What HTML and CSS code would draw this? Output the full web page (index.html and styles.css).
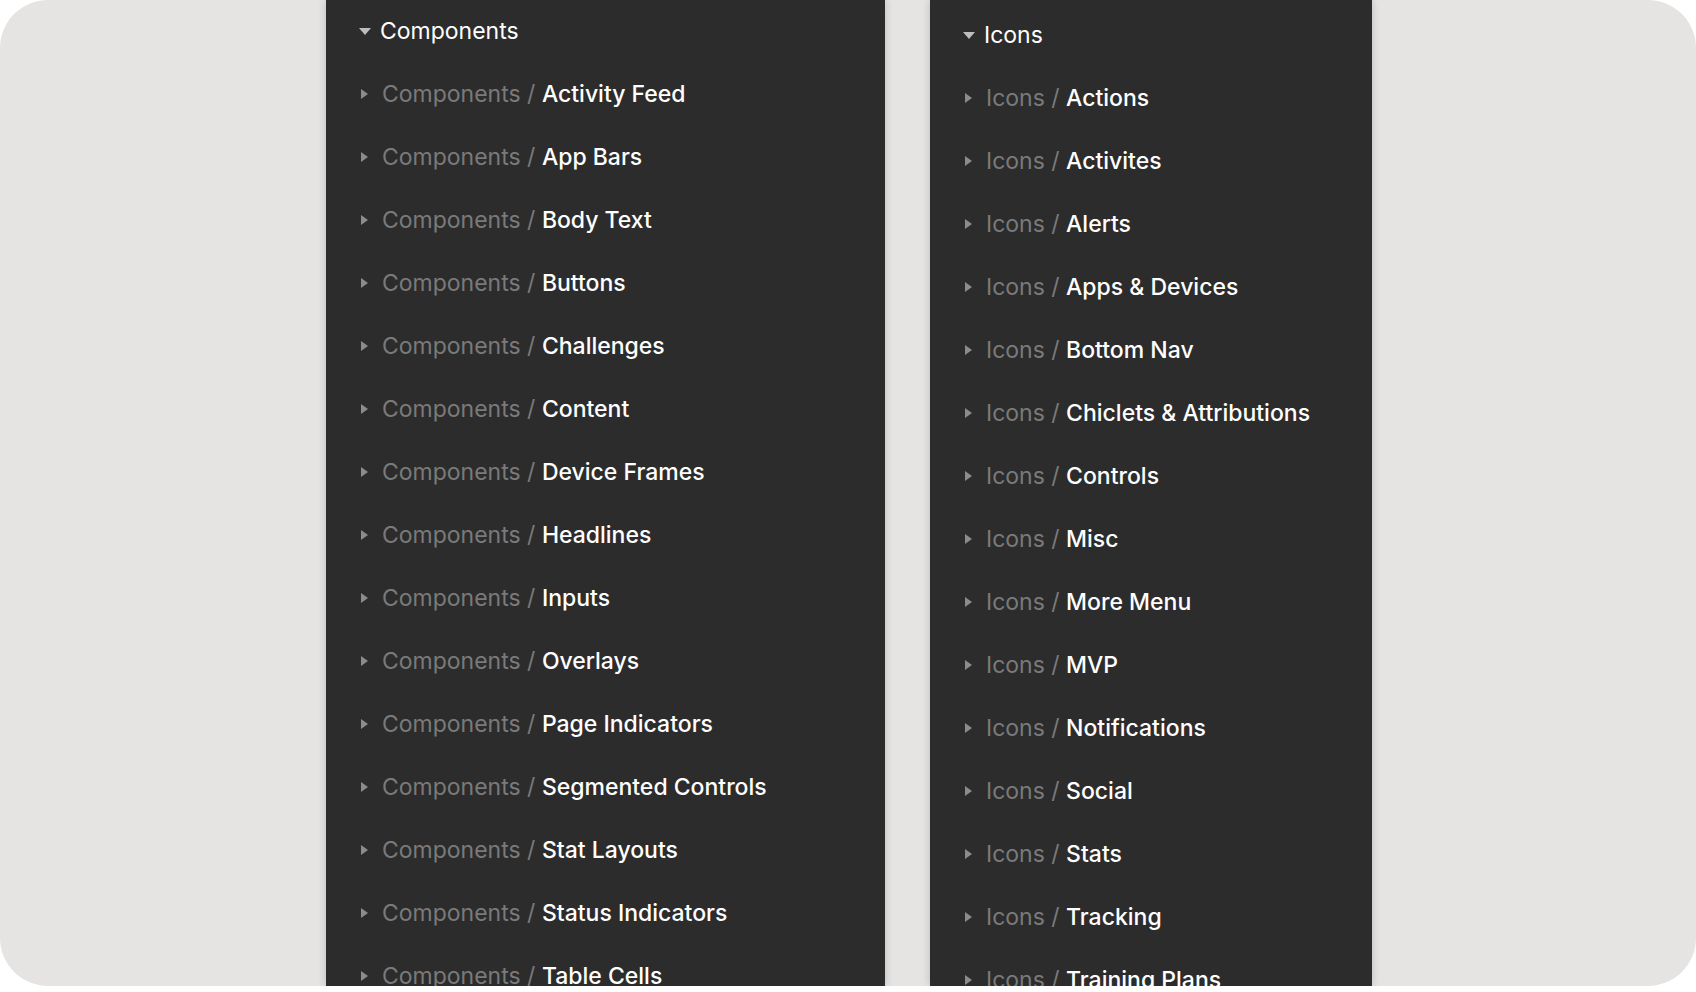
FILE: index.html
```html
<!DOCTYPE html>
<html lang="en">
<head>
    <meta charset="UTF-8">
    <title>Pages</title>
    <link rel="stylesheet" href="styles.css">
</head>
<body>
    <div class="board">
        <div class="panel panel-components">
            <div class="row head"><span class="caret down"></span><span class="name">Components</span></div>
            <div class="row"><span class="caret"></span><span class="group">Components / </span><span class="name">Activity Feed</span></div>
            <div class="row"><span class="caret"></span><span class="group">Components / </span><span class="name">App Bars</span></div>
            <div class="row"><span class="caret"></span><span class="group">Components / </span><span class="name">Body Text</span></div>
            <div class="row"><span class="caret"></span><span class="group">Components / </span><span class="name">Buttons</span></div>
            <div class="row"><span class="caret"></span><span class="group">Components / </span><span class="name">Challenges</span></div>
            <div class="row"><span class="caret"></span><span class="group">Components / </span><span class="name">Content</span></div>
            <div class="row"><span class="caret"></span><span class="group">Components / </span><span class="name">Device Frames</span></div>
            <div class="row"><span class="caret"></span><span class="group">Components / </span><span class="name">Headlines</span></div>
            <div class="row"><span class="caret"></span><span class="group">Components / </span><span class="name">Inputs</span></div>
            <div class="row"><span class="caret"></span><span class="group">Components / </span><span class="name">Overlays</span></div>
            <div class="row"><span class="caret"></span><span class="group">Components / </span><span class="name">Page Indicators</span></div>
            <div class="row"><span class="caret"></span><span class="group">Components / </span><span class="name">Segmented Controls</span></div>
            <div class="row"><span class="caret"></span><span class="group">Components / </span><span class="name">Stat Layouts</span></div>
            <div class="row"><span class="caret"></span><span class="group">Components / </span><span class="name">Status Indicators</span></div>
            <div class="row"><span class="caret"></span><span class="group">Components / </span><span class="name">Table Cells</span></div>
        </div>

        <div class="panel panel-icons">
            <div class="row head"><span class="caret down"></span><span class="name">Icons</span></div>
            <div class="row"><span class="caret"></span><span class="group">Icons / </span><span class="name">Actions</span></div>
            <div class="row"><span class="caret"></span><span class="group">Icons / </span><span class="name">Activites</span></div>
            <div class="row"><span class="caret"></span><span class="group">Icons / </span><span class="name">Alerts</span></div>
            <div class="row"><span class="caret"></span><span class="group">Icons / </span><span class="name">Apps &amp; Devices</span></div>
            <div class="row"><span class="caret"></span><span class="group">Icons / </span><span class="name">Bottom Nav</span></div>
            <div class="row"><span class="caret"></span><span class="group">Icons / </span><span class="name">Chiclets &amp; Attributions</span></div>
            <div class="row"><span class="caret"></span><span class="group">Icons / </span><span class="name">Controls</span></div>
            <div class="row"><span class="caret"></span><span class="group">Icons / </span><span class="name">Misc</span></div>
            <div class="row"><span class="caret"></span><span class="group">Icons / </span><span class="name">More Menu</span></div>
            <div class="row"><span class="caret"></span><span class="group">Icons / </span><span class="name">MVP</span></div>
            <div class="row"><span class="caret"></span><span class="group">Icons / </span><span class="name">Notifications</span></div>
            <div class="row"><span class="caret"></span><span class="group">Icons / </span><span class="name">Social</span></div>
            <div class="row"><span class="caret"></span><span class="group">Icons / </span><span class="name">Stats</span></div>
            <div class="row"><span class="caret"></span><span class="group">Icons / </span><span class="name">Tracking</span></div>
            <div class="row"><span class="caret"></span><span class="group">Icons / </span><span class="name">Training Plans</span></div>
        </div>
    </div>
</body>
</html>
```

FILE: styles.css
```css
body {
    margin: 0;
    background: #ffffff;
    font-family: Inter, "Noto Sans", sans-serif;
    overflow: hidden;
}
.board {
    height: 986px;
    background: #e5e4e2;
    border-radius: 48px;
    overflow: hidden;
    display: flex;
    align-items: stretch;
    gap: 45px;
    padding-left: 326px;
}
.panel {
    background: #2c2c2c;
    box-shadow: 0 0 8px rgba(0, 0, 0, 0.18);
    overflow: hidden;
    padding-left: 33px;
    box-sizing: border-box;
}
.panel-components {
    width: 559px;
    padding-top: 1px;
}
.panel-icons {
    width: 442px;
    padding-top: 5px;
}
.row {
    height: 63px;
    display: flex;
    align-items: center;
    font-size: 23px;
    white-space: nowrap;
}
.head {
    height: 62px;
    margin-top: -1px;
}
.caret {
    width: 0;
    height: 0;
    border-top: 5px solid transparent;
    border-bottom: 5px solid transparent;
    border-left: 7px solid #8c8c8c;
    margin-right: 14px;
    margin-left: 2px;
}
.caret.down {
    border-left: 6px solid transparent;
    border-right: 6px solid transparent;
    border-top: 7px solid #bdbdbd;
    border-bottom: 0;
    margin-left: 0;
    margin-right: 9px;
}
.group {
    color: #7a7a7a;
    white-space: pre;
}
.name {
    color: #ffffff;
    font-weight: 500;
}
.head .name {
    font-weight: 400;
}
```
